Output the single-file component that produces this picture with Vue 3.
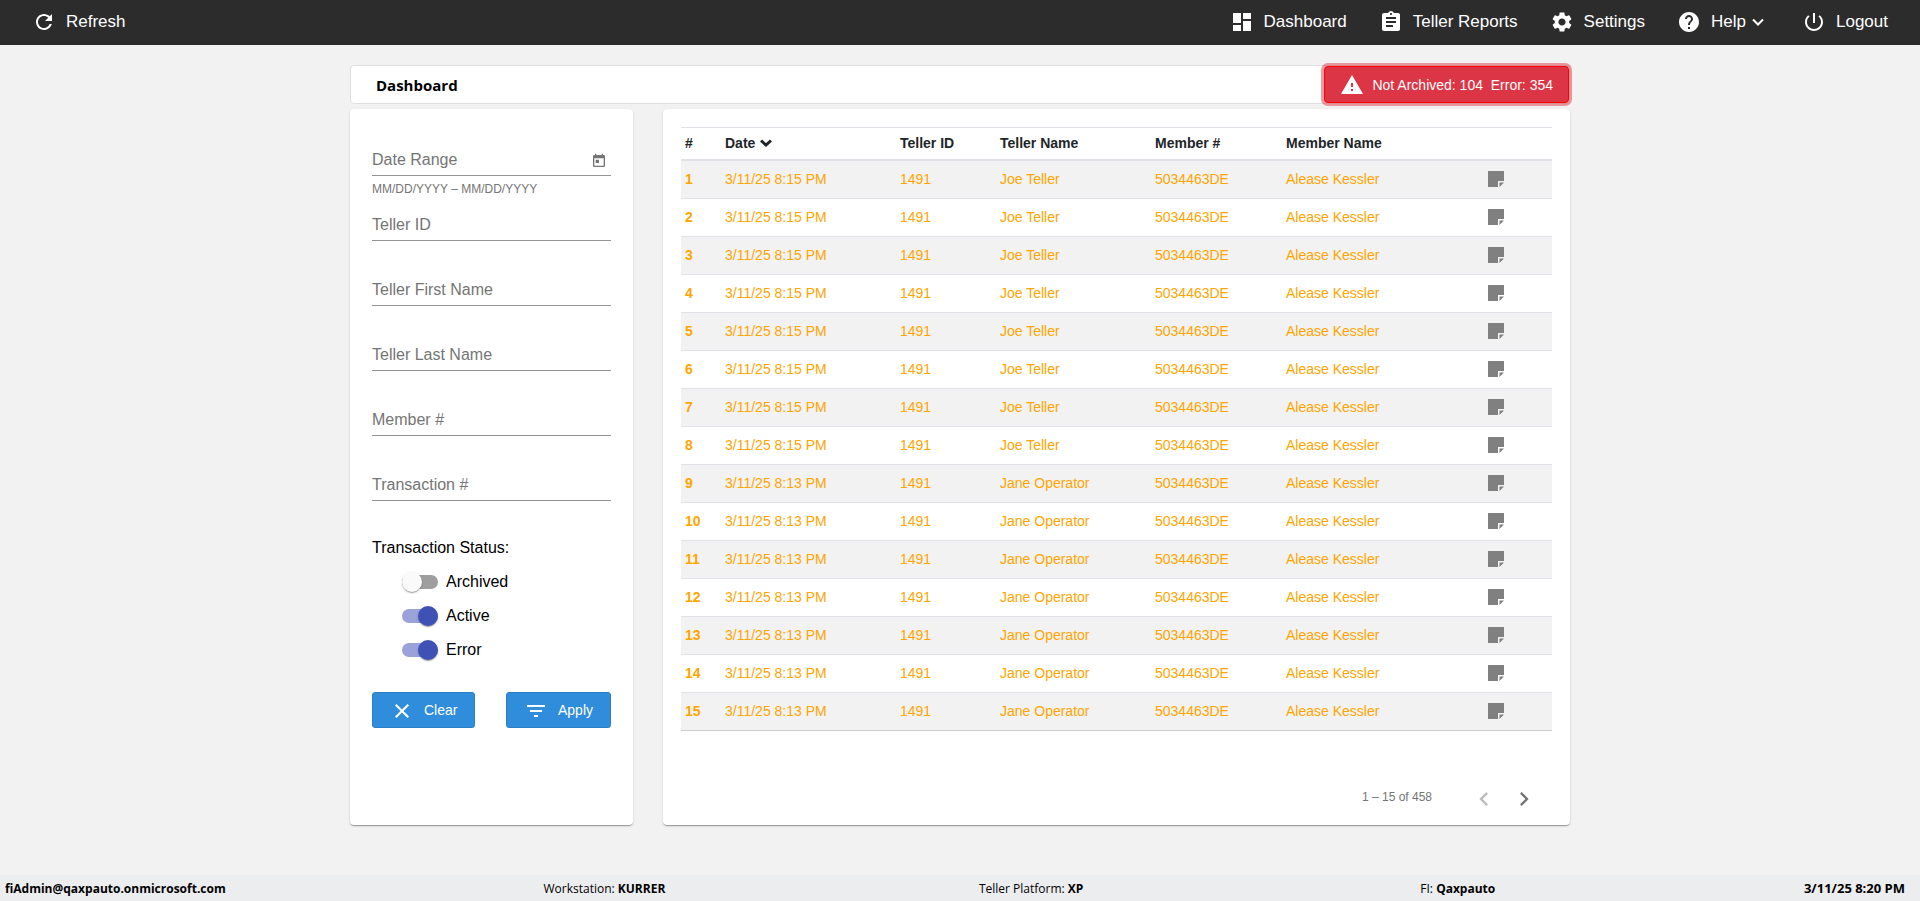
<script setup>
import { ref } from 'vue'

const icons = {
  refresh: 'M17.65 6.35C16.2 4.9 14.21 4 12 4c-4.42 0-7.99 3.58-7.99 8s3.57 8 7.99 8c3.73 0 6.84-2.55 7.73-6h-2.08c-.82 2.33-3.04 4-5.65 4-3.31 0-6-2.69-6-6s2.69-6 6-6c1.66 0 3.14.69 4.22 1.78L13 11h7V4l-2.35 2.35z',
  dashboard: 'M3 13h8V3H3v10zm0 8h8v-6H3v6zm10 0h8V11h-8v10zm0-18v6h8V3h-8z',
  reports: 'M19 3h-4.18C14.4 1.84 13.3 1 12 1c-1.3 0-2.4.84-2.82 2H5c-1.1 0-2 .9-2 2v14c0 1.1.9 2 2 2h14c1.1 0 2-.9 2-2V5c0-1.1-.9-2-2-2zm-7 0c.55 0 1 .45 1 1s-.45 1-1 1-1-.45-1-1 .45-1 1-1zm2 14H7v-2h7v2zm3-4H7v-2h10v2zm0-4H7V7h10v2z',
  settings: 'M19.14 12.94c.04-.3.06-.61.06-.94 0-.32-.02-.64-.07-.94l2.03-1.58c.18-.14.23-.41.12-.61l-1.92-3.32c-.12-.22-.37-.29-.59-.22l-2.39.96c-.5-.38-1.03-.7-1.62-.94l-.36-2.54c-.04-.24-.24-.41-.48-.41h-3.84c-.24 0-.43.17-.47.41l-.36 2.54c-.59.24-1.13.57-1.62.94l-2.39-.96c-.22-.08-.47 0-.59.22L2.74 8.87c-.12.21-.08.47.12.61l2.03 1.58c-.05.3-.09.63-.09.94s.02.64.07.94l-2.03 1.58c-.18.14-.23.41-.12.61l1.92 3.32c.12.22.37.29.59.22l2.39-.96c.5.38 1.03.7 1.62.94l.36 2.54c.05.24.24.41.48.41h3.84c.24 0 .44-.17.47-.41l.36-2.54c.59-.24 1.13-.56 1.62-.94l2.39.96c.22.08.47 0 .59-.22l1.92-3.32c.12-.22.07-.47-.12-.61l-2.01-1.58zM12 15.6c-1.98 0-3.6-1.62-3.6-3.6s1.62-3.6 3.6-3.6 3.6 1.62 3.6 3.6-1.62 3.6-3.6 3.6z',
  help: 'M12 2C6.48 2 2 6.48 2 12s4.48 10 10 10 10-4.48 10-10S17.52 2 12 2zm1 17h-2v-2h2v2zm2.07-7.75l-.9.92C13.45 12.9 13 13.5 13 15h-2v-.5c0-1.1.45-2.1 1.17-2.83l1.24-1.26c.37-.36.59-.86.59-1.41 0-1.1-.9-2-2-2s-2 .9-2 2H8c0-2.21 1.79-4 4-4s4 1.79 4 4c0 .88-.36 1.68-.93 2.25z',
  logout: 'M13 3h-2v10h2V3zm4.83 2.17l-1.42 1.42C17.99 7.86 19 9.81 19 12c0 3.87-3.13 7-7 7s-7-3.13-7-7c0-2.19 1.01-4.14 2.58-5.42L6.17 5.17C4.23 6.82 3 9.26 3 12c0 4.97 4.03 9 9 9s9-4.03 9-9c0-2.74-1.23-5.18-3.17-6.83z',
}

const nav = [
  { label: 'Dashboard', icon: 'dashboard' },
  { label: 'Teller Reports', icon: 'reports' },
  { label: 'Settings', icon: 'settings' },
  { label: 'Help', icon: 'help', menu: true },
  { label: 'Logout', icon: 'logout' },
]

const fields = ref([
  { id: 'teller-id', label: 'Teller ID', value: '' },
  { id: 'first-name', label: 'Teller First Name', value: '' },
  { id: 'last-name', label: 'Teller Last Name', value: '' },
  { id: 'member', label: 'Member #', value: '' },
  { id: 'transaction', label: 'Transaction #', value: '' },
])
const dateRange = ref('')

const statuses = ref([
  { label: 'Archived', on: false },
  { label: 'Active', on: true },
  { label: 'Error', on: true },
])

const rows = Array.from({ length: 15 }, (_, i) => ({
  n: i + 1,
  date: i < 8 ? '3/11/25 8:15 PM' : '3/11/25 8:13 PM',
  teller: '1491',
  name: i < 8 ? 'Joe Teller' : 'Jane Operator',
  member: '5034463DE',
  memberName: 'Alease Kessler',
}))

function clearFilters() {
  dateRange.value = ''
  fields.value.forEach((f) => { f.value = '' })
}
</script>

<template>
  <div class="page">
    <header class="topbar">
      <button type="button" class="nav-item">
        <svg class="icon" viewBox="0 0 24 24"><path :d="icons.refresh" /></svg>
        <span>Refresh</span>
      </button>
      <nav class="nav">
        <a v-for="item in nav" :key="item.label" href="#" class="nav-item" :class="{ menu: item.menu }">
          <svg class="icon" viewBox="0 0 24 24"><path :d="icons[item.icon]" /></svg>
          <span>{{ item.label }}</span>
          <svg v-if="item.menu" class="caret" viewBox="0 0 12 8"><path d="M1 1.500 6 6.500l5-5" /></svg>
        </a>
      </nav>
    </header>

    <main class="content">
      <div class="titlebar">
        <h1>Dashboard</h1>
        <button type="button" class="alert">
          <svg class="icon" viewBox="0 0 24 24"><path d="M1 21h22L12 2 1 21zm12-3h-2v-2h2v2zm0-4h-2v-4h2v4z" /></svg>
          <span>Not Archived: 104&nbsp; Error: 354</span>
        </button>
      </div>

      <div class="columns">
        <form class="card filters" @submit.prevent>
          <div class="field">
            <div class="control">
              <input v-model="dateRange" type="text" placeholder="Date Range" aria-label="Date Range" aria-describedby="date-hint" />
              <button type="button" class="calendar" aria-label="Open calendar">
                <svg viewBox="0 0 24 24"><path d="M19 3h-1V1h-2v2H8V1H6v2H5c-1.110 0-1.990.9-1.990 2L3 19c0 1.100.890 2 2 2h14c1.100 0 2-.9 2-2V5c0-1.100-.9-2-2-2zm0 16H5V8h14v11zM7 10h5v5H7z" /></svg>
              </button>
            </div>
            <p id="date-hint" class="hint">MM/DD/YYYY – MM/DD/YYYY</p>
          </div>
          <div v-for="f in fields" :key="f.id" class="field">
            <div class="control">
              <input :id="f.id" v-model="f.value" type="text" :placeholder="f.label" :aria-label="f.label" />
            </div>
          </div>

          <fieldset class="status">
            <legend>Transaction Status:</legend>
            <label v-for="s in statuses" :key="s.label" class="toggle">
              <input v-model="s.on" type="checkbox" role="switch" />
              <span>{{ s.label }}</span>
            </label>
          </fieldset>

          <div class="actions">
            <button type="button" class="btn" @click="clearFilters">
              <svg class="icon" viewBox="0 0 24 24"><path d="M19 6.410L17.590 5 12 10.590 6.410 5 5 6.410 10.590 12 5 17.590 6.410 19 12 13.410 17.590 19 19 17.590 13.410 12z" /></svg>
              <span>Clear</span>
            </button>
            <button type="submit" class="btn">
              <svg class="icon" viewBox="0 0 24 24"><path d="M10 18h4v-2h-4v2zM3 6v2h18V6H3zm3 7h12v-2H6v2z" /></svg>
              <span>Apply</span>
            </button>
          </div>
        </form>

        <section class="card results">
          <table>
            <colgroup>
              <col class="c-num" /><col class="c-date" /><col class="c-id" /><col class="c-name" />
              <col class="c-member" /><col class="c-mname" /><col class="c-note" />
            </colgroup>
            <thead>
              <tr>
                <th scope="col">#</th>
                <th scope="col">
                  <span class="sort">Date
                    <svg class="caret bold" viewBox="0 0 12 8"><path d="M1 1.500 6 6l5-4.500" /></svg>
                  </span>
                </th>
                <th scope="col">Teller ID</th>
                <th scope="col">Teller Name</th>
                <th scope="col">Member #</th>
                <th scope="col">Member Name</th>
                <th></th>
              </tr>
            </thead>
            <tbody>
              <tr v-for="r in rows" :key="r.n">
                <th scope="row">{{ r.n }}</th>
                <td>{{ r.date }}</td>
                <td>{{ r.teller }}</td>
                <td>{{ r.name }}</td>
                <td>{{ r.member }}</td>
                <td>{{ r.memberName }}</td>
                <td class="note">
                  <button type="button" aria-label="Open note">
                    <svg viewBox="0 0 16 16"><path d="M0 0h16v10h-6v6H0zM11.500 11.500H16L11.500 16z" /></svg>
                  </button>
                </td>
              </tr>
            </tbody>
          </table>
          <div class="paginator">
            <span class="range">1 – 15 of 458</span>
            <button type="button" disabled aria-label="Previous page">
              <svg viewBox="0 0 24 24"><path d="M15.410 7.410L14 6l-6 6 6 6 1.410-1.410L10.830 12z" /></svg>
            </button>
            <button type="button" aria-label="Next page">
              <svg viewBox="0 0 24 24"><path d="M10 6L8.590 7.410 13.170 12l-4.580 4.590L10 18l6-6z" /></svg>
            </button>
          </div>
        </section>
      </div>
    </main>

    <footer class="footer">
      <span><b>fiAdmin@qaxpauto.onmicrosoft.com</b></span>
      <span>Workstation: <b>KURRER</b></span>
      <span>Teller Platform: <b>XP</b></span>
      <span>FI: <b>Qaxpauto</b></span>
      <span class="clock"><b>3/11/25 8:20 PM</b></span>
    </footer>
  </div>
</template>

<style>
body {
  margin: 0;
  background: #f2f2f2;
}
</style>

<style scoped>
.page {
  display: flex;
  flex-direction: column;
  min-height: 100vh;
  background: #f2f2f2;
  color: #000;
  font-family: "Liberation Sans", Arial, sans-serif;
  font-size: 14px;
}
.page *,
.page *::before {
  box-sizing: border-box;
}
button,
input {
  font-family: inherit;
  font-size: inherit;
}
button {
  margin: 0;
  padding: 0;
  border: 0;
  background: none;
  cursor: pointer;
}
.icon {
  flex: none;
  width: 24px;
  height: 24px;
  fill: currentColor;
}
.caret {
  flex: none;
  width: 12px;
  height: 8px;
  fill: none;
  stroke: currentColor;
  stroke-width: 2;
}
.caret.bold {
  stroke-width: 3;
}

.topbar {
  display: flex;
  justify-content: space-between;
  align-items: center;
  height: 45px;
  padding: 0 32px 1px;
  background: #2c2c2c;
}
.nav {
  display: flex;
  gap: 32px;
}
.nav-item {
  display: flex;
  align-items: center;
  gap: 10px;
  color: #fff;
  font-size: 17px;
  line-height: 24px;
  text-decoration: none;
}
.menu {
  margin-right: 6px;
}
.menu .caret {
  margin-left: -4px;
}

.content {
  flex: 1;
  width: 100%;
  max-width: 1220px;
  margin: 0 auto;
  padding: 20px 0;
}
.titlebar {
  display: flex;
  justify-content: space-between;
  align-items: stretch;
  height: 39px;
  margin-bottom: 5px;
  border: 1px solid #dfdfdf;
  border-radius: 4px;
  background: #fff;
}
h1 {
  margin: 0;
  padding-left: 25px;
  font-family: "Segoe UI", "Open Sans", "Noto Sans", sans-serif;
  font-size: 15px;
  font-weight: 700;
  line-height: 38px;
}
.alert {
  display: flex;
  align-items: center;
  gap: 8px;
  padding: 0 15px;
  border: 1px solid #f00;
  border-radius: 4px;
  background: #dc3545;
  box-shadow: 0 0 0 3px rgba(220, 53, 69, 0.5);
  color: #fff;
}

.columns {
  display: grid;
  grid-template-columns: 283px 1fr;
  gap: 30px;
}
.card {
  border-radius: 4px;
  background: #fff;
  box-shadow: 0 2px 1px -1px rgba(0, 0, 0, 0.2), 0 1px 1px 0 rgba(0, 0, 0, 0.14), 0 1px 3px 0 rgba(0, 0, 0, 0.12);
}

.filters {
  padding: 37px 22px 22px;
}
.field {
  height: 65px;
}
.control {
  display: flex;
  align-items: center;
  height: 30px;
  padding-bottom: 2px;
  border-bottom: 1px solid #949494;
}
.control input {
  flex: 1;
  min-width: 0;
  padding: 0;
  border: 0;
  outline: 0;
  background: none;
  font-size: 16px;
  line-height: 24px;
}
.control input::placeholder {
  color: #757575;
  opacity: 1;
}
.calendar {
  display: flex;
  padding: 2px 4px 0;
}
.calendar svg {
  width: 16px;
  height: 16px;
  fill: #757575;
}
.hint {
  margin: 5px 0 0;
  color: #757575;
  font-size: 12px;
  line-height: 16px;
}
.status {
  margin: 0;
  padding: 0;
  border: 0;
  font-size: 16px;
}
.status legend {
  padding: 2px 0 7px;
  line-height: 20px;
}
.toggle {
  display: flex;
  align-items: center;
  gap: 8px;
  height: 34px;
  margin-left: 30px;
}
.toggle input {
  appearance: none;
  position: relative;
  width: 36px;
  height: 14px;
  margin: 0;
  border-radius: 7px;
  background: #9e9e9e;
}
.toggle input::before {
  content: "";
  position: absolute;
  top: -3px;
  left: 0;
  width: 20px;
  height: 20px;
  border-radius: 50%;
  background: #fafafa;
  box-shadow: 0 2px 1px -1px rgba(0, 0, 0, 0.2), 0 1px 1px 0 rgba(0, 0, 0, 0.14), 0 1px 3px 0 rgba(0, 0, 0, 0.12);
}
.toggle input:checked {
  background: #9aa2d9;
}
.toggle input:checked::before {
  left: 16px;
  background: #3f51b5;
}
.actions {
  display: flex;
  justify-content: space-between;
  margin-top: 25px;
}
.btn {
  display: flex;
  align-items: center;
  gap: 10px;
  height: 36px;
  padding: 0 17px;
  border: 1px solid #2b80c6;
  border-radius: 3px;
  background: #308ddb;
  color: #fff;
}
.btn .icon {
  padding-top: 2px;
  height: 26px;
}

.results {
  padding: 18px 18px 6px;
}
table {
  width: 100%;
  border-spacing: 0;
  table-layout: fixed;
}
.c-num { width: 40px; }
.c-date { width: 175px; }
.c-id { width: 100px; }
.c-name { width: 155px; }
.c-member { width: 131px; }
.c-note { width: 112px; }
th,
td {
  height: 38px;
  padding: 0 4px 2px;
  border-bottom: 1px solid #dee2e6;
  text-align: left;
  line-height: 20px;
}
thead th {
  height: 34px;
  border-top: 1px solid #dee2e6;
  border-bottom-width: 2px;
  color: #212529;
}
tbody tr {
  color: #ffa500;
}
tbody tr:nth-child(odd) {
  background: #f2f2f2;
}
tbody tr:last-child > * {
  border-bottom-color: #ccc;
}
.sort {
  display: flex;
  align-items: center;
  gap: 5px;
}
.note {
  padding-bottom: 4px;
  text-align: center;
}
.note button {
  vertical-align: middle;
}
.note svg {
  display: block;
  width: 16px;
  height: 16px;
  fill: #808080;
}
.paginator {
  display: flex;
  justify-content: flex-end;
  align-items: center;
  margin-top: 48px;
  padding-right: 8px;
  color: #757575;
  font-size: 12px;
}
.range {
  margin-right: 32px;
  padding-bottom: 4px;
}
.paginator button {
  display: flex;
  align-items: center;
  justify-content: center;
  width: 40px;
  height: 40px;
}
.paginator svg {
  width: 28px;
  height: 28px;
  fill: #757575;
}
.paginator button:disabled svg {
  fill: #bdbdbd;
}

.footer {
  display: grid;
  grid-template-columns: 11fr 12fr 12fr 12fr 7fr;
  padding-top: 1px;
  background: #ecedef;
  font-family: "Segoe UI", "Open Sans", "Noto Sans", sans-serif;
  font-size: 12px;
  line-height: 25px;
  text-align: center;
  white-space: nowrap;
}
.footer span:first-child {
  padding-left: 5px;
  text-align: left;
}
.footer .clock {
  padding-right: 15px;
  font-size: 13px;
  text-align: right;
}
</style>
